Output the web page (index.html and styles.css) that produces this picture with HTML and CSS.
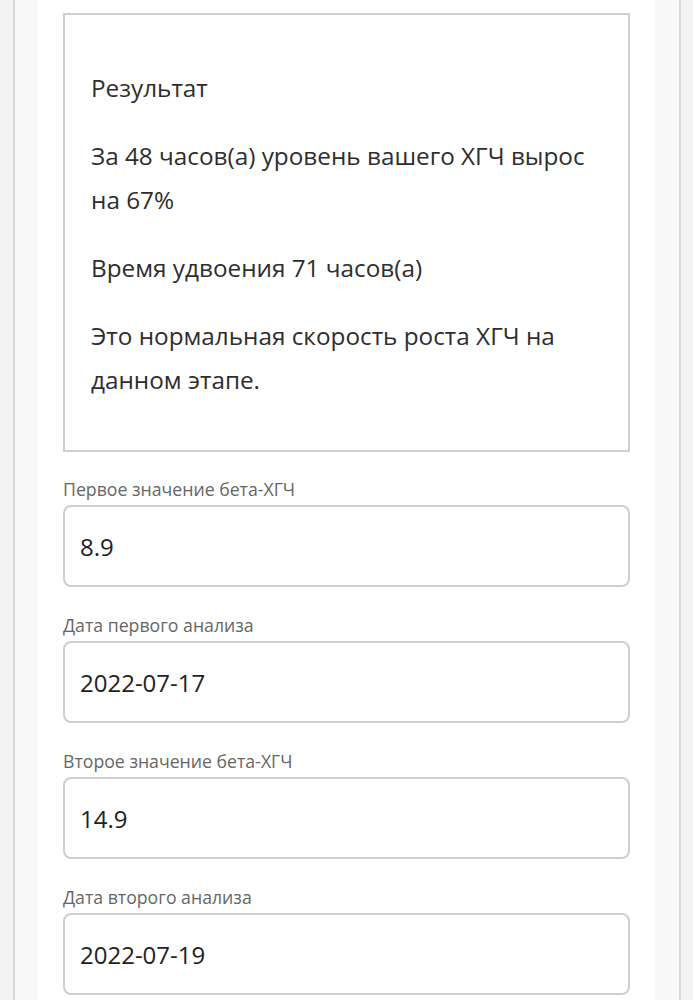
FILE: index.html
```html
<!DOCTYPE html>
<html lang="ru">
<head>
<meta charset="utf-8">
<title>Калькулятор ХГЧ</title>
<link rel="stylesheet" href="styles.css">
</head>
<body>
<div class="frame">
  <main class="content">
    <section class="result">
      <p>Результат</p>
      <p>За 48 часов(а) уровень вашего ХГЧ вырос на 67%</p>
      <p>Время удвоения 71 часов(а)</p>
      <p>Это нормальная скорость роста ХГЧ на данном этапе.</p>
    </section>
    <form class="form">
      <div class="group">
        <label class="label" for="v1">Первое значение бета-ХГЧ</label>
        <input class="field" id="v1" type="text" value="8.9">
      </div>
      <div class="group">
        <label class="label" for="d1">Дата первого анализа</label>
        <input class="field" id="d1" type="text" value="2022-07-17">
      </div>
      <div class="group">
        <label class="label" for="v2">Второе значение бета-ХГЧ</label>
        <input class="field" id="v2" type="text" value="14.9">
      </div>
      <div class="group">
        <label class="label" for="d2">Дата второго анализа</label>
        <input class="field" id="d2" type="text" value="2022-07-19">
      </div>
    </form>
  </main>
</div>
</body>
</html>
```
FILE: styles.css
```css
html, body {
  margin: 0;
  padding: 0;
}
body {
  background: #f3f3f3;
  font-family: "Open Sans", "Noto Sans", sans-serif;
  color: #333;
  height: 1000px;
  overflow: hidden;
}
.frame {
  margin: 0 12px 0 13px;
  border-left: 2px solid #dadada;
  border-right: 2px solid #dadada;
  background: #f8f8f8;
  padding: 0 24px 0 23px;
  min-height: 1000px;
}
.content {
  background: #fff;
  padding: 13px 25px 0 25px;
  min-height: 1000px;
  box-sizing: border-box;
}
.result {
  border: 2px solid #cfcfcf;
  padding: 27px 26px 24px 26px;
  margin-bottom: 25px;
}
.result p {
  margin: 24px 0;
  font-size: 24.3px;
  line-height: 44px;
  color: #2e2e2e;
}
.form {
  display: flex;
  flex-direction: column;
  gap: 26px;
  margin: 0;
}
.group {
  display: flex;
  flex-direction: column;
  gap: 4px;
}
.label {
  font-size: 17.7px;
  line-height: 24px;
  color: #666;
}
.field {
  box-sizing: border-box;
  width: 100%;
  height: 82px;
  border: 2px solid #cfcfcf;
  border-radius: 8px;
  padding: 0 15px;
  margin: 0;
  font-family: "Open Sans", "Noto Sans", sans-serif;
  font-size: 24px;
  color: #222;
  background: #fff;
  outline: none;
}
```
